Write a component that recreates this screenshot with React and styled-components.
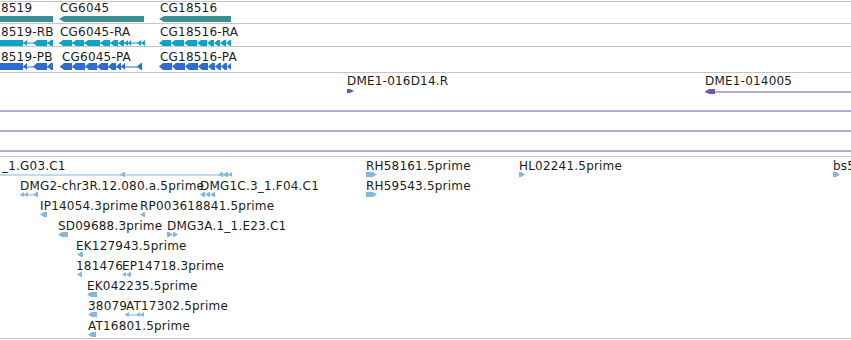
import React from "react";
import styled, { createGlobalStyle } from "styled-components";

const GlobalStyle = createGlobalStyle`
  html, body {
    margin: 0;
    padding: 0;
    background: #fff;
    overflow: hidden;
  }
  body {
    font-family: "DejaVu Sans", Verdana, sans-serif;
  }
`;

const Browser = styled.div`
  width: 851px;
  height: 340px;
  padding-top: 1px;
  box-sizing: border-box;
  display: flex;
  flex-direction: column;
  overflow: hidden;
`;

const Track = styled.div`
  position: relative;
  flex: none;
  box-sizing: border-box;
  height: ${(p) => p.$h}px;
  border-top: 1px solid #c4c4c4;
  overflow: hidden;
`;

const Label = styled.span.attrs((p) => ({
  style: { left: p.$x, top: p.$y },
}))`
  position: absolute;
  font-size: 12px;
  line-height: 14px;
  letter-spacing: 0.2px;
  color: #1c1c1c;
  white-space: nowrap;
`;

const Glyphs = styled.svg`
  position: absolute;
  left: 0;
  top: 0;
  width: 851px;
  height: 100%;
  overflow: visible;
`;

const COLORS = {
  gene: "#3b8f91",
  mrna: "#0ea3c4",
  cds: "#2f6bd1",
  clone: "#6b5aa3",
  est: "#82b8de",
};

// arrow-block: pointed at the left (or right) end
const seg = (x0, x1, y, h, dir = "l", tip = 4) => {
  const m = y + h / 2;
  const t = Math.min(tip, x1 - x0);
  if (dir === "l")
    return `${x0},${m} ${x0 + t},${y} ${x1},${y} ${x1},${y + h} ${x0 + t},${y + h}`;
  return `${x0},${y} ${x1 - t},${y} ${x1},${m} ${x1 - t},${y + h} ${x0},${y + h}`;
};

const Feature = ({ segs = [], lines = [], y, h, color, dir = "l", tip }) => (
  <g>
    {lines.map(([a, b], i) => (
      <rect key={"l" + i} x={a} y={Math.round(y + h / 2) - 0.5} width={b - a} height={1} fill={color} />
    ))}
    {segs.map(([a, b], i) => (
      <polygon key={"s" + i} points={seg(a, b, y, h, dir, tip)} fill={color} />
    ))}
  </g>
);

/* ---- track data ---- */

const genes = [
  { name: "CG18519", x: -25, segs: [[-10, 53]] },
  { name: "CG6045", x: 60, segs: [[59, 144]] },
  { name: "CG18516", x: 160, segs: [[159, 231]] },
];

const transcripts = [
  {
    name: "CG18519-RB",
    x: -25,
    segs: [[-5, 23], [23, 27], [33, 47], [47, 53]],
    lines: [[23, 53]],
  },
  {
    name: "CG6045-RA",
    x: 60,
    segs: [[59, 72], [72, 84], [84, 100], [100, 110], [110, 118], [118, 124], [124, 128], [128, 131], [137, 141], [141, 145]],
    lines: [[59, 145]],
  },
  {
    name: "CG18516-RA",
    x: 160,
    segs: [[159, 171], [171, 184], [184, 197], [197, 207], [207, 214], [214, 220], [220, 226], [226, 231]],
  },
];

const proteins = [
  {
    name: "CG18519-PB",
    x: -25,
    segs: [[-5, 23], [23, 27], [33, 47], [47, 53]],
    lines: [[23, 53]],
  },
  {
    name: "CG6045-PA",
    x: 62,
    segs: [[60, 72], [72, 85], [85, 97], [97, 108], [108, 116], [116, 121], [121, 125], [137, 142]],
    lines: [[60, 142]],
  },
  {
    name: "CG18516-PA",
    x: 160,
    segs: [[159, 172], [172, 185], [185, 198], [198, 208], [208, 215], [215, 221], [221, 227], [227, 231]],
  },
];

const ests = [
  { name: "_1.G03.C1", x: 2, row: 0, segs: [[120, 125], [218, 223], [223, 228], [228, 232]], lines: [[-5, 232]] },
  { name: "RH58161.5prime", x: 366, row: 0, dir: "r", segs: [[366, 377]] },
  { name: "HL02241.5prime", x: 519, row: 0, dir: "r", segs: [[519, 525]] },
  { name: "bs51224.5prime", x: 833, row: 0, dir: "r", segs: [[833, 840]] },
  { name: "DMG2-chr3R.12.080.a.5prime", x: 20, row: 1, segs: [[20, 24], [24, 28], [33, 38]], lines: [[20, 38]] },
  { name: "DMG1C.3_1.F04.C1", x: 200, row: 1, segs: [[200, 205], [205, 210], [210, 215]] },
  { name: "RH59543.5prime", x: 366, row: 1, dir: "r", segs: [[366, 377]] },
  { name: "IP14054.3prime", x: 40, row: 2, segs: [[40, 47]] },
  { name: "RP003618841.5prime", x: 140, row: 2, segs: [[140, 145]] },
  { name: "SD09688.3prime", x: 58, row: 3, segs: [[58, 68]] },
  { name: "DMG3A.1_1.E23.C1", x: 167, row: 3, dir: "r", segs: [[167, 173], [173, 178]] },
  { name: "EK127943.5prime", x: 76, row: 4, segs: [[77, 83]] },
  { name: "181476", x: 76, row: 5, segs: [[77, 82]] },
  { name: "EP14718.3prime", x: 122, row: 5, segs: [[122, 126], [126, 131]] },
  { name: "EK042235.5prime", x: 87, row: 6, segs: [[87, 97]] },
  { name: "38079", x: 88, row: 7, segs: [[88, 97]] },
  { name: "AT17302.5prime", x: 126, row: 7, segs: [[125, 129], [136, 140], [140, 144]], lines: [[125, 144]] },
  { name: "AT16801.5prime", x: 88, row: 8, segs: [[88, 96]] },
];

const App = () => (
  <>
    <GlobalStyle />
    <Browser>
      <Track $h={22}>
        <Glyphs>
          {genes.map((g) => (
            <Feature key={g.name} segs={g.segs} y={14} h={6} color={COLORS.gene} tip={5} />
          ))}
        </Glyphs>
        {genes.map((g) => (
          <Label key={g.name} $x={g.x} $y={-1}>{g.name}</Label>
        ))}
      </Track>

      <Track $h={23}>
        <Glyphs>
          {transcripts.map((t) => (
            <Feature key={t.name} segs={t.segs} lines={t.lines} y={16} h={6} color={COLORS.mrna} />
          ))}
        </Glyphs>
        {transcripts.map((t) => (
          <Label key={t.name} $x={t.x} $y={1}>{t.name}</Label>
        ))}
      </Track>

      <Track $h={26}>
        <Glyphs>
          {proteins.map((t) => (
            <Feature key={t.name} segs={t.segs} lines={t.lines} y={16} h={7} color={COLORS.cds} />
          ))}
        </Glyphs>
        {proteins.map((t) => (
          <Label key={t.name} $x={t.x} $y={3}>{t.name}</Label>
        ))}
      </Track>

      <Track $h={84}>
        <Glyphs>
          <Feature segs={[[347, 354]]} dir="r" y={16} h={4} color={COLORS.clone} />
          <Feature segs={[[705, 715]]} lines={[[705, 860]]} y={16} h={5} color={COLORS.clone} />
          <Feature lines={[[-5, 860]]} y={35} h={5} color={COLORS.clone} />
          <Feature lines={[[-5, 860]]} y={55} h={5} color={COLORS.clone} />
          <Feature lines={[[-5, 860]]} y={75} h={5} color={COLORS.clone} />
        </Glyphs>
        <Label $x={347} $y={1}>DME1-016D14.R</Label>
        <Label $x={705} $y={1}>DME1-014005</Label>
      </Track>

      <Track $h={182}>
        <Glyphs>
          {ests.map((e) => (
            <Feature key={e.name} segs={e.segs} lines={e.lines} dir={e.dir} y={15 + e.row * 20} h={5} color={COLORS.est} />
          ))}
        </Glyphs>
        {ests.map((e) => (
          <Label key={e.name} $x={e.x} $y={2 + e.row * 20}>{e.name}</Label>
        ))}
      </Track>

      <Track $h={10} />
    </Browser>
  </>
);

export default App;
